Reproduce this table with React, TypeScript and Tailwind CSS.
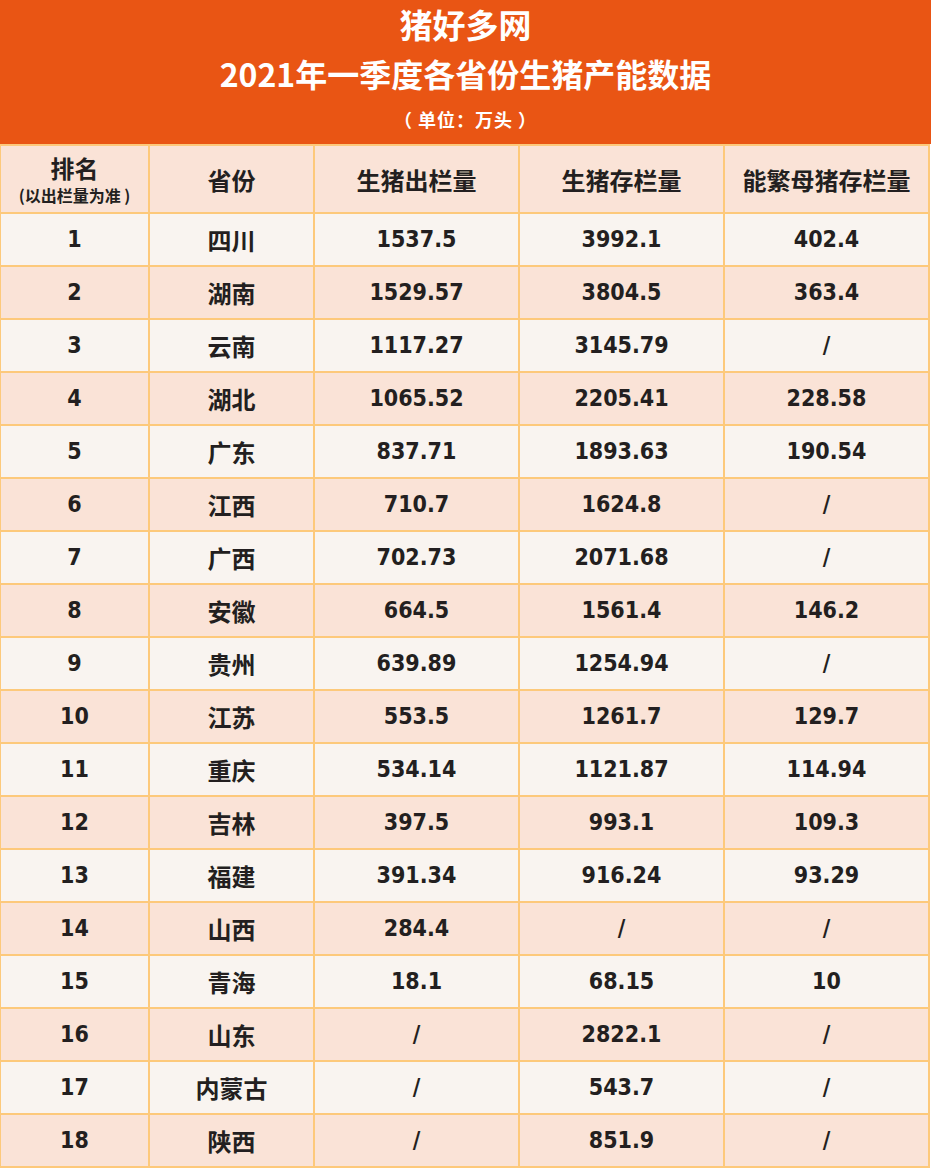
import React from "react";

const rows: [string, string, string, string, string][] = [
  ["1", "四川", "1537.5", "3992.1", "402.4"],
  ["2", "湖南", "1529.57", "3804.5", "363.4"],
  ["3", "云南", "1117.27", "3145.79", "/"],
  ["4", "湖北", "1065.52", "2205.41", "228.58"],
  ["5", "广东", "837.71", "1893.63", "190.54"],
  ["6", "江西", "710.7", "1624.8", "/"],
  ["7", "广西", "702.73", "2071.68", "/"],
  ["8", "安徽", "664.5", "1561.4", "146.2"],
  ["9", "贵州", "639.89", "1254.94", "/"],
  ["10", "江苏", "553.5", "1261.7", "129.7"],
  ["11", "重庆", "534.14", "1121.87", "114.94"],
  ["12", "吉林", "397.5", "993.1", "109.3"],
  ["13", "福建", "391.34", "916.24", "93.29"],
  ["14", "山西", "284.4", "/", "/"],
  ["15", "青海", "18.1", "68.15", "10"],
  ["16", "山东", "/", "2822.1", "/"],
  ["17", "内蒙古", "/", "543.7", "/"],
  ["18", "陕西", "/", "851.9", "/"],
];

const cjk = "font-['Noto_Sans_CJK_SC',sans-serif]";
const num = "font-['DejaVu_Sans_Condensed','DejaVu_Sans','Noto_Sans_CJK_SC',sans-serif]";

export default function App() {
  return (
    <div className="w-[931px] h-[1169px] bg-white text-[#231f20]">
      <div className={`h-[144px] bg-[#e95514] text-white font-bold flex flex-col items-center ${cjk}`}>
        <div className="text-[33px] leading-none mt-[8px]">猪好多网</div>
        <div className="text-[32px] leading-none mt-[16px]">2021年一季度各省份生猪产能数据</div>
        <div className="text-[18px] leading-none mt-[21px] tracking-[1px]">（ 单位：万头 ）</div>
      </div>
      <div className="w-[930px] bg-[#fdc97b] pl-[1px] pr-[2px] pt-[2px] pb-[2px] grid grid-cols-[147px_163px_203px_203px_203px] grid-rows-[66px_repeat(18,51px)] gap-[2px]">
        <div className={`bg-[#fae3d7] flex flex-col items-center justify-start pt-[8px] font-bold ${cjk}`}>
          <div className="text-[24px] leading-[28px]">排名</div>
          <div className="text-[16px] leading-[20px] mt-[3px] font-bold">(以出栏量为准 )</div>
        </div>
        {["省份", "生猪出栏量", "生猪存栏量", "能繁母猪存栏量"].map((h) => (
          <div key={h} className={`bg-[#fae3d7] flex items-center justify-center text-[24px] font-bold pt-[2px] ${cjk}`}>
            {h}
          </div>
        ))}
        {rows.map((r, i) => {
          const bg = i % 2 === 0 ? "bg-[#f9f4f0]" : "bg-[#fae3d7]";
          return (
            <React.Fragment key={i}>
              {r.map((c, j) => (
                <div
                  key={j}
                  className={`${bg} flex items-center justify-center font-bold ${j === 1 ? `text-[24px] ${cjk}` : `text-[23px] ${num}`}`}
                >
                  {c}
                </div>
              ))}
            </React.Fragment>
          );
        })}
      </div>
    </div>
  );
}
